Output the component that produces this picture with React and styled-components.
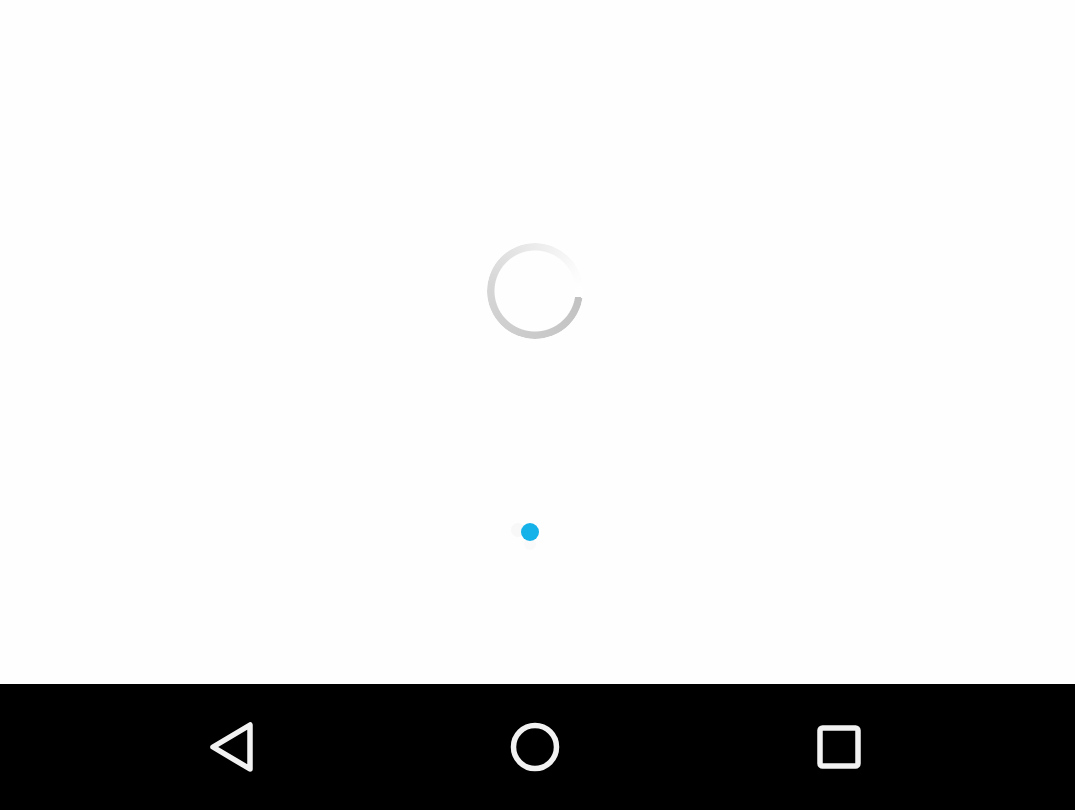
import styled, { createGlobalStyle } from "styled-components";

const GlobalStyle = createGlobalStyle`
  html, body {
    margin: 0;
    padding: 0;
    background: #ffffff;
    font-family: "Roboto", "Liberation Sans", sans-serif;
  }
`;

const Screen = styled.div`
  width: 1075px;
  height: 810px;
  display: flex;
  flex-direction: column;
  overflow: hidden;
`;

const Content = styled.div`
  height: 684px;
  background: #fefefe;
  display: flex;
  flex-direction: column;
  align-items: center;
`;

const Spinner = styled.div`
  margin-top: 243px;
  margin-left: -5px;
  width: 96px;
  height: 96px;
  border-radius: 50%;
  background: conic-gradient(
    from 98deg,
    #c2c2c2 0deg,
    #cbcbcb 90deg,
    #d6d6d6 180deg,
    #ebebeb 260deg,
    #fafafa 320deg,
    #ffffff 350deg
  );
  -webkit-mask: radial-gradient(circle, transparent 40px, #000 41px);
  mask: radial-gradient(circle, transparent 40px, #000 41px);
`;

const Dot = styled.div`
  margin-top: 184px;
  margin-left: -15px;
  width: 18px;
  height: 18px;
  border-radius: 50%;
  background: #15b1e9;
  box-shadow: -12px -2px 0 -2px #f8f8f8, 0 12px 0 -3px #fafafa;
`;

const NavBar = styled.div`
  height: 126px;
  background: #000000;
  display: grid;
  grid-template-columns: 460px 150px 1fr;
  align-items: center;
`;

const NavButton = styled.div`
  display: flex;
  align-items: center;
  justify-content: ${({ $align }) => $align || "center"};
  padding-left: ${({ $pad }) => $pad || 0}px;
`;

const App = () => {
  return (
    <>
      <GlobalStyle />
      <Screen>
        <Content>
          <Spinner />
          <Dot />
        </Content>
        <NavBar>
          <NavButton $align="flex-start" $pad={208}>
            <svg width="48" height="52" viewBox="0 0 48 52">
              <path
                d="M42 4 L42 48 L5 26 Z"
                fill="none"
                stroke="#f2f2f2"
                strokeWidth="5.5"
                strokeLinejoin="round"
              />
            </svg>
          </NavButton>
          <NavButton>
            <svg width="52" height="52" viewBox="0 0 52 52">
              <circle cx="26" cy="26" r="21.5" fill="none" stroke="#f2f2f2" strokeWidth="5.5" />
            </svg>
          </NavButton>
          <NavButton $align="flex-start" $pad={205}>
            <svg width="48" height="48" viewBox="0 0 48 48">
              <rect x="5" y="5" width="38" height="38" rx="2.5" fill="none" stroke="#f2f2f2" strokeWidth="5.5" />
            </svg>
          </NavButton>
        </NavBar>
      </Screen>
    </>
  );
};

export default App;
